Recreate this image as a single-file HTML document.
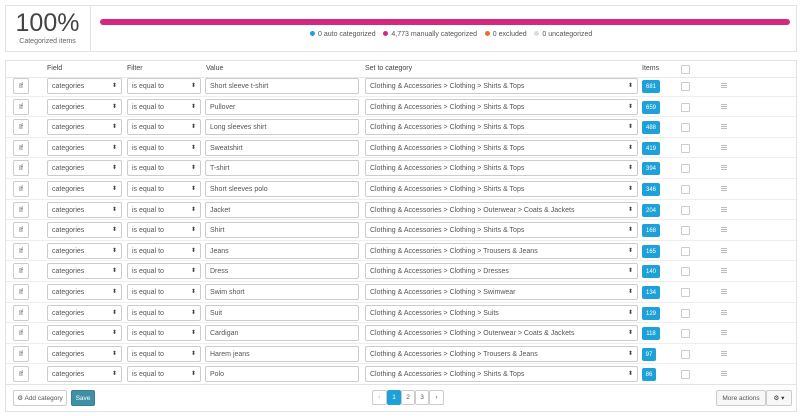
<!DOCTYPE html><html><head><style>
*{box-sizing:border-box;margin:0;padding:0}
body{width:800px;height:416px;background:#fff;font-family:"Liberation Sans",sans-serif;color:#555;position:relative;overflow:hidden;font-size:7px}
.a{position:absolute}
.box{border:1px solid #e3e3e3;background:#fff}
.inp{position:absolute;height:16px;border:1px solid #ccc;border-radius:2px;padding-left:4px;font-size:7px;color:#555;background:#fff;display:flex;align-items:center;white-space:nowrap}
.sel:after{content:"⬍";position:absolute;right:4px;top:4px;font-size:6px;color:#444;line-height:6px}
.badge{position:absolute;height:13px;background:#1ea1d8;color:#fff;border-radius:2px;font-size:6px;display:flex;align-items:center;justify-content:center}
.cb{position:absolute;width:9px;height:9px;border:1px solid #ccc;border-radius:1px;background:#fff}
.hb{position:absolute;width:6px;height:5px;border-top:1px solid #bbb;border-bottom:1px solid #bbb}
.hb:after{content:"";position:absolute;left:0;right:0;top:1px;border-top:1px solid #bbb}
.dot{display:inline-block;width:5px;height:5px;border-radius:50%;margin-right:3px;vertical-align:0}
.btn{position:absolute;border:1px solid #ccc;border-radius:2px;background:#f7f7f7;font-size:6.5px;display:flex;align-items:center;justify-content:center;white-space:nowrap}
</style></head><body>
<div class="a box" style="left:5px;top:5px;width:792px;height:47px"></div>
<div class="a" style="left:90px;top:6px;width:1px;height:45px;background:#e3e3e3"></div>
<div class="a" style="left:5px;top:10px;width:85px;text-align:center;font-size:25px;color:#444;line-height:26px">100%</div>
<div class="a" style="left:5px;top:38px;width:85px;text-align:center;font-size:7px;color:#666">Categorized items</div>
<div class="a" style="left:100px;top:19px;width:690px;height:6px;border-radius:3px;background:#d4287f"></div>
<div class="a" style="left:310px;top:31px;font-size:7px;color:#555;white-space:nowrap">
<span class="dot" style="background:#1ea1d8"></span>0 auto categorized &nbsp;&nbsp;&nbsp;<span class="dot" style="background:#d4287f"></span>4,773 manually categorized &nbsp;&nbsp;&nbsp;<span class="dot" style="background:#e8702a"></span>0 excluded &nbsp;&nbsp;&nbsp;<span class="dot" style="background:#ddd"></span>0 uncategorized</div>
<div class="a box" style="left:5px;top:60px;width:792px;height:352px"></div>
<div class="a" style="left:6px;top:77px;width:790px;height:1px;background:#e8e8e8"></div>
<div class="a" style="left:6px;top:384px;width:790px;height:1px;background:#e3e3e3"></div>
<div class="a" style="top:65px;left:47px;font-size:7px;color:#444">Field</div>
<div class="a" style="top:65px;left:127px;font-size:7px;color:#444">Filter</div>
<div class="a" style="top:65px;left:206px;font-size:7px;color:#444">Value</div>
<div class="a" style="top:65px;left:365px;font-size:7px;color:#444">Set to category</div>
<div class="a" style="top:65px;left:642px;font-size:7px;color:#444">Items</div>
<div class="cb" style="left:681px;top:65px"></div>
<div id="rows"></div>
<script>
var d=[["Short sleeve t-shirt","Clothing & Accessories > Clothing > Shirts & Tops",681],["Pullover","Clothing & Accessories > Clothing > Shirts & Tops",659],["Long sleeves shirt","Clothing & Accessories > Clothing > Shirts & Tops",488],["Sweatshirt","Clothing & Accessories > Clothing > Shirts & Tops",419],["T-shirt","Clothing & Accessories > Clothing > Shirts & Tops",394],["Short sleeves polo","Clothing & Accessories > Clothing > Shirts & Tops",346],["Jacket","Clothing & Accessories > Clothing > Outerwear > Coats & Jackets",204],["Shirt","Clothing & Accessories > Clothing > Shirts & Tops",168],["Jeans","Clothing & Accessories > Clothing > Trousers & Jeans",165],["Dress","Clothing & Accessories > Clothing > Dresses",140],["Swim short","Clothing & Accessories > Clothing > Swimwear",134],["Suit","Clothing & Accessories > Clothing > Suits",129],["Cardigan","Clothing & Accessories > Clothing > Outerwear > Coats & Jackets",118],["Harem jeans","Clothing & Accessories > Clothing > Trousers & Jeans",97],["Polo","Clothing & Accessories > Clothing > Shirts & Tops",86]];
var h="";d.forEach(function(r,i){var c=Math.round(86+i*20.6),t=c-8;
if(i>0)h+='<div class="a" style="left:6px;top:'+(c-11)+'px;width:790px;height:1px;background:#eee"></div>';
h+='<div class="inp" style="left:13px;top:'+t+'px;width:16px;padding-left:5px">If</div>';
h+='<div class="inp sel" style="left:47px;top:'+t+'px;width:75px">categories</div>';
h+='<div class="inp sel" style="left:127px;top:'+t+'px;width:74px">is equal to</div>';
h+='<div class="inp" style="left:205px;top:'+t+'px;width:154px">'+r[0]+'</div>';
h+='<div class="inp sel" style="left:365px;top:'+t+'px;width:273px">'+r[1].replace(/&/g,"&amp;").replace(/>/g,"&gt;")+'</div>';
var w=r[2]>99?18:14;h+='<div class="badge" style="left:642px;top:'+(c-6)+'px;width:'+w+'px">'+r[2]+'</div>';
h+='<div class="cb" style="left:681px;top:'+(c-4)+'px"></div>';
h+='<div class="hb" style="left:721px;top:'+(c-3)+'px"></div>';});
document.getElementById("rows").innerHTML=h;
</script>
<div class="btn" style="left:13px;top:390px;width:54px;height:16px;background:#fff">⚙ Add category</div>
<div class="btn" style="left:71px;top:390px;width:24px;height:16px;background:#3e90a8;border-color:#367f95;color:#fff">Save</div>
<div class="btn" style="left:372px;top:390px;width:15px;height:15px;background:#fff;color:#aaa">‹</div>
<div class="btn" style="left:387px;top:390px;width:14px;height:15px;background:#1ea1d8;border-color:#1ea1d8;color:#fff">1</div>
<div class="btn" style="left:401px;top:390px;width:14px;height:15px;background:#fff">2</div>
<div class="btn" style="left:415px;top:390px;width:14px;height:15px;background:#fff">3</div>
<div class="btn" style="left:429px;top:390px;width:15px;height:15px;background:#fff">›</div>
<div class="btn" style="left:716px;top:390px;width:50px;height:16px">More actions</div>
<div class="btn" style="left:766px;top:390px;width:26px;height:16px;color:#333">⚙ ▾</div>
</body></html>
